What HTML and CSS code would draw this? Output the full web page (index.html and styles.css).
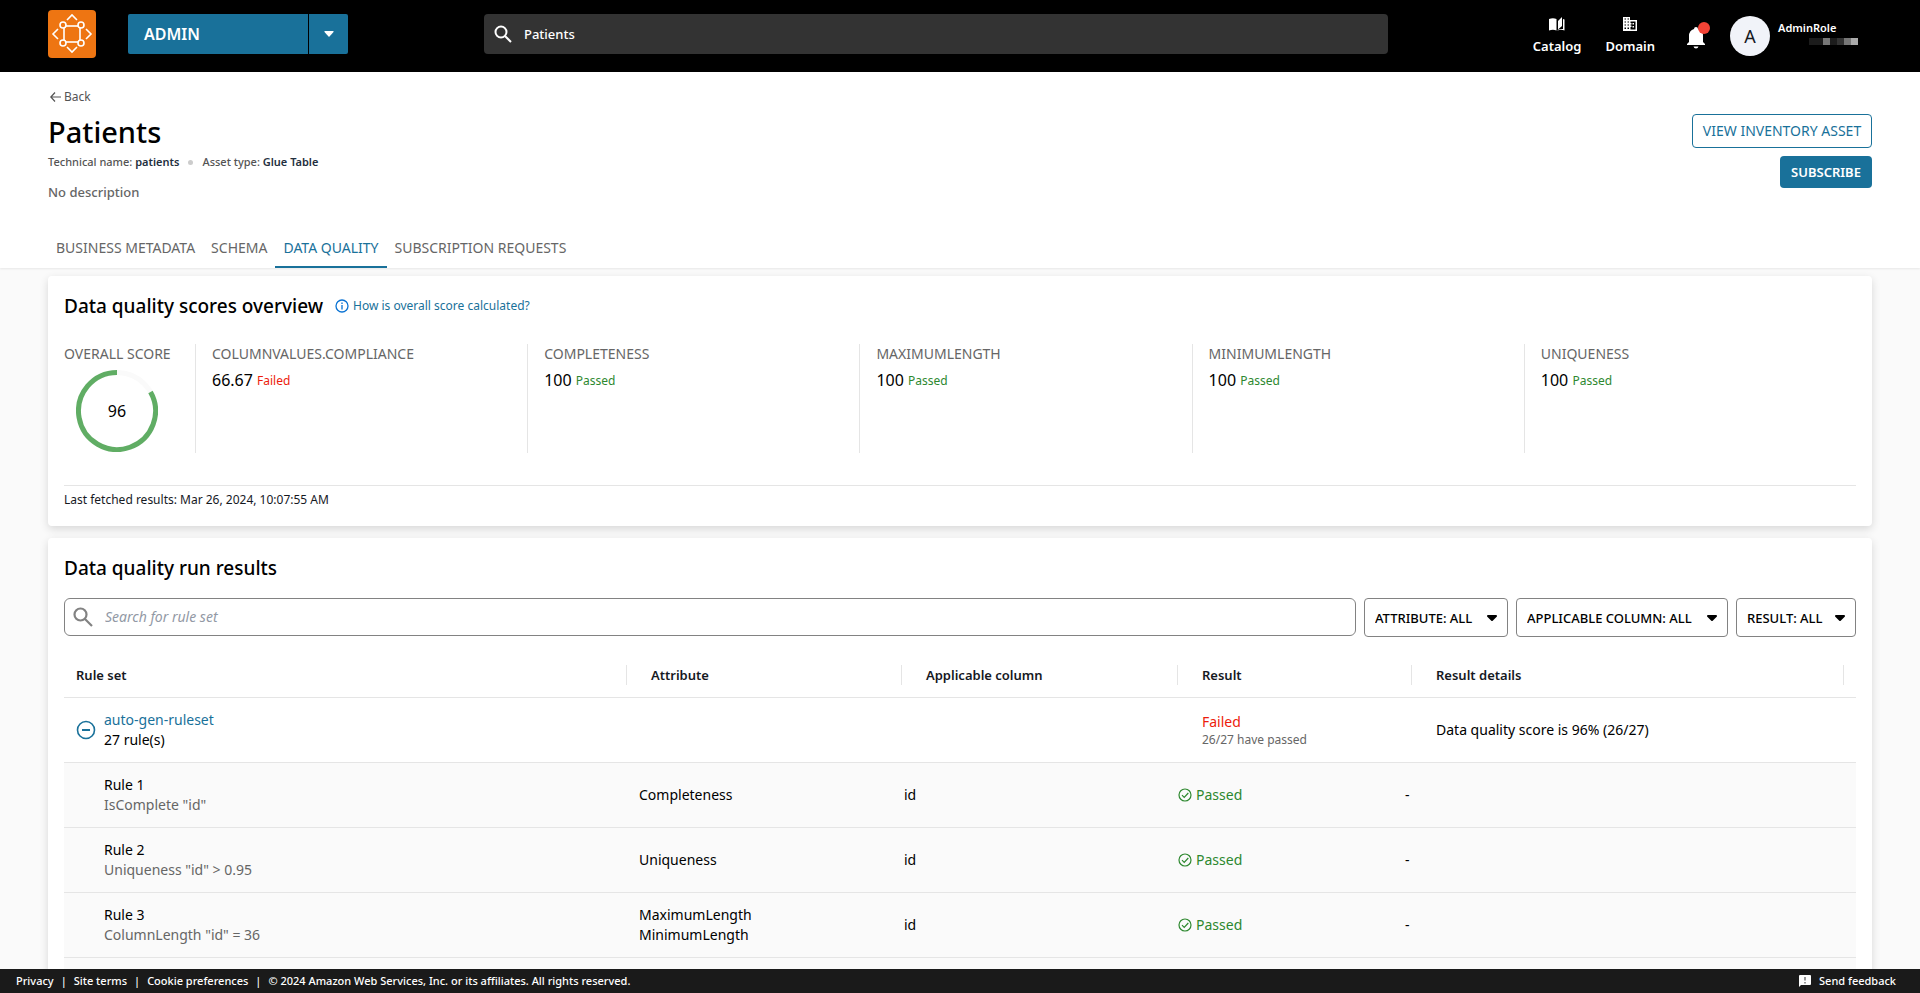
FILE: index.html
```html
<!DOCTYPE html>
<html lang="en">
<head>
  <meta charset="UTF-8" />
  <meta name="viewport" content="width=device-width, initial-scale=1.0"/>
  <title>Patients - Data quality</title>
  <link rel="stylesheet" href="styles.css">
</head>
<body>
  <!-- Top bar -->
  <header class="topbar">
    <a href="#" class="logo" aria-label="Home">
      <svg width="48" height="48" viewBox="0 0 48 48" fill="none" stroke="#fff" stroke-width="1.6">
        <rect x="16" y="16" width="16" height="16"/>
        <path d="M19 10l5-5 5 5M19 37l5 5 5-5M10 19l-5 5 5 5M38 19l5 5-5 5"/>
        <g fill="#ee7512">
          <circle cx="15" cy="15" r="3"/>
          <circle cx="33" cy="15" r="3"/>
          <circle cx="15" cy="33" r="3"/>
          <circle cx="33" cy="33" r="3"/>
        </g>
      </svg>
    </a>
    <div class="project">
      <button class="project-name">ADMIN</button>
      <button class="project-toggle" aria-label="Choose project">
        <svg width="10" height="6" viewBox="0 0 10 6"><path d="M1 0h8q1 0 .5 1L5.500 5.500q-.5.500-1 0L.5 1Q0 0 1 0z" fill="#fff"/></svg>
      </button>
    </div>
    <div class="site-search">
      <svg width="18" height="18" viewBox="0 0 18 18" fill="none" stroke="#fff" stroke-width="2"><circle cx="7" cy="7" r="5.500"/><path d="M11 11l6 6"/></svg>
      <input type="text" value="Patients" aria-label="Search catalog">
    </div>
    <nav class="top-links">
      <a href="#">
        <svg width="16" height="14" viewBox="0 0 16 14" fill="#fff"><path d="M0 2q4-1.500 7.500 0v11.500Q4 12 0 13.500zM13 0v9l-4 3.500V4zM14 2l1.500.5v11Q12 12 8.500 13.500V13q3-1.500 5.500-1z"/></svg>
        <span>Catalog</span>
      </a>
      <a href="#">
        <svg width="14" height="14" viewBox="0 0 14 14" fill="#fff"><path fill-rule="evenodd" d="M0 0h7v3h7v11H0zM1.500 1.500v1h1.500v-1zM4.500 1.500v1h1.500v-1zM1.500 4.500v1h1.500v-1zM4.500 4.500v1h1.500v-1zM1.500 7.500v1h1.500v-1zM4.500 7.500v1h1.500v-1zM1.500 10.500v1.500h1.500v-1.500zM4.500 10.500v1.500h1.500v-1.500zM7.500 4.500v1.500h1v1.500h-1v1h1v1.500h-1v2.500h5V4.500zM9.500 6h1.500v1.500H9.500zM9.500 9h1.500v1.500H9.500z"/></svg>
        <span>Domain</span>
      </a>
    </nav>
    <button class="bell" aria-label="Notifications">
      <svg width="18" height="22" viewBox="0 0 18 22" fill="#fff"><path d="M9 0q2 0 2 2 5 1.500 5 7v6l2 2v1H0v-1l2-2V9q0-5.500 5-7 0-2 2-2zM6.500 19.500h5q-.5 2-2.500 2t-2.500-2z"/></svg>
      <span class="bell-dot"></span>
    </button>
    <div class="user">
      <span class="avatar">A</span>
      <div class="user-text">
        <span>AdminRole</span>
        <span class="masked"><i></i><i></i><i></i><i></i><i></i><i></i><i></i></span>
      </div>
    </div>
  </header>

  <!-- Asset title and tabs -->
  <section class="asset">
    <div class="asset-row">
      <div>
        <a href="#" class="back">
          <svg width="11" height="10" viewBox="0 0 11 10" fill="none" stroke="#545454" stroke-width="1.200"><path d="M5 .5L.8 5 5 9.500M1 5h10"/></svg>
          Back
        </a>
        <h1>Patients</h1>
        <p class="meta">
          <span>Technical name: <b>patients</b></span>
          <span class="meta-dot"></span>
          <span>Asset type: <b>Glue Table</b></span>
        </p>
        <p class="description">No description</p>
      </div>
      <div class="actions">
        <button class="btn-outline">VIEW INVENTORY ASSET</button>
        <button class="btn-primary">SUBSCRIBE</button>
      </div>
    </div>
    <nav class="tabs">
      <a href="#">BUSINESS METADATA</a>
      <a href="#">SCHEMA</a>
      <a href="#" class="active">DATA QUALITY</a>
      <a href="#">SUBSCRIPTION REQUESTS</a>
    </nav>
  </section>

  <main>
    <section class="card overview">
      <div class="card-head">
        <h2>Data quality scores overview</h2>
        <a href="#" class="info">
          <svg width="14" height="14" viewBox="0 0 14 14" fill="none" stroke="#0972d3" stroke-width="1.300"><circle cx="7" cy="7" r="6"/><path d="M7 6v4.500M7 3.500v1.500"/></svg>
          How is overall score calculated?
        </a>
      </div>
      <div class="scores">
        <div class="overall">
          <h3>OVERALL SCORE</h3>
          <div class="ring">
            <svg width="82" height="82" viewBox="0 0 82 82" fill="none" stroke-width="5">
              <circle cx="41" cy="41" r="38.500" stroke="#fafafa"/>
              <path d="M74.500 22A38.500 38.500 0 1 1 41 2.500" stroke="#60ad64"/>
            </svg>
            <span>96</span>
          </div>
        </div>
        <div class="score"><h3>COLUMNVALUES.COMPLIANCE</h3><p>66.67 <small class="failed">Failed</small></p></div>
        <div class="score"><h3>COMPLETENESS</h3><p>100 <small class="passed">Passed</small></p></div>
        <div class="score"><h3>MAXIMUMLENGTH</h3><p>100 <small class="passed">Passed</small></p></div>
        <div class="score"><h3>MINIMUMLENGTH</h3><p>100 <small class="passed">Passed</small></p></div>
        <div class="score"><h3>UNIQUENESS</h3><p>100 <small class="passed">Passed</small></p></div>
      </div>
      <p class="fetched">Last fetched results: Mar 26, 2024, 10:07:55 AM</p>
    </section>

    <section class="card results">
      <h2>Data quality run results</h2>
      <div class="filters">
        <div class="rule-search">
          <svg width="20" height="20" viewBox="0 0 20 20" fill="none" stroke="#828282" stroke-width="2.200"><circle cx="7.500" cy="7.500" r="6"/><path d="M12 12l7 7"/></svg>
          <input type="text" placeholder="Search for rule set" aria-label="Search for rule set">
        </div>
        <select class="filter-attribute" aria-label="Attribute"><option>ATTRIBUTE: ALL</option></select>
        <select class="filter-column" aria-label="Applicable column"><option>APPLICABLE COLUMN: ALL</option></select>
        <select class="filter-result" aria-label="Result"><option>RESULT: ALL</option></select>
      </div>

      <table>
        <colgroup>
          <col class="col-rule"><col class="col-attribute"><col class="col-column"><col class="col-result"><col>
        </colgroup>
        <thead>
          <tr>
            <th><span>Rule set</span></th>
            <th><span>Attribute</span></th>
            <th><span>Applicable column</span></th>
            <th><span>Result</span></th>
            <th><span class="last">Result details</span></th>
          </tr>
        </thead>
        <tbody>
          <tr>
            <td>
              <div class="ruleset">
                <button aria-label="Collapse ruleset">
                  <svg width="20" height="20" viewBox="0 0 20 20" fill="none" stroke="#19719a" stroke-width="1.600"><circle cx="10" cy="10" r="8.500"/><path d="M6 10h8" stroke-width="2"/></svg>
                </button>
                <div><a href="#">auto-gen-ruleset</a><br>27 rule(s)</div>
              </div>
            </td>
            <td></td>
            <td></td>
            <td><span class="failed">Failed</span><small>26/27 have passed</small></td>
            <td>Data quality score is 96% (26/27)</td>
          </tr>
          <tr class="rule">
            <td>Rule 1<br><span class="expr">IsComplete "id"</span></td>
            <td>Completeness</td>
            <td>id</td>
            <td class="passed"><svg class="check"><use href="#check"/></svg>Passed</td>
            <td>-</td>
          </tr>
          <tr class="rule">
            <td>Rule 2<br><span class="expr">Uniqueness "id" &gt; 0.95</span></td>
            <td>Uniqueness</td>
            <td>id</td>
            <td class="passed"><svg class="check"><use href="#check"/></svg>Passed</td>
            <td>-</td>
          </tr>
          <tr class="rule">
            <td>Rule 3<br><span class="expr">ColumnLength "id" = 36</span></td>
            <td>MaximumLength<br>MinimumLength</td>
            <td>id</td>
            <td class="passed"><svg class="check"><use href="#check"/></svg>Passed</td>
            <td>-</td>
          </tr>
          <tr class="rule">
            <td></td><td></td><td></td><td></td><td></td>
          </tr>
        </tbody>
      </table>
    </section>
  </main>

  <footer>
    <a href="#">Privacy</a><i>|</i>
    <a href="#">Site terms</a><i>|</i>
    <a href="#">Cookie preferences</a><i>|</i>
    <span>© 2024 Amazon Web Services, Inc. or its affiliates. All rights reserved.</span>
    <button class="feedback">
      <svg width="12" height="12" viewBox="0 0 12 12"><path d="M1 0h10q1 0 1 1v8q0 1-1 1H2l-2 2V1q0-1 1-1z" fill="#fff"/><path d="M6 2v3.500M6 7v1.500" stroke="#555" stroke-width="1.200"/></svg>
      Send feedback
    </button>
  </footer>

  <svg class="sprite" aria-hidden="true">
    <symbol id="check" viewBox="0 0 14 14">
      <circle cx="7" cy="7" r="6" fill="none" stroke="#2d882f" stroke-width="1.200"/>
      <path d="M4 7.200l2.200 2.200L10.300 5" fill="none" stroke="#2d882f" stroke-width="1.200"/>
    </symbol>
  </svg>
</body>
</html>
```

FILE: styles.css
```css
* {
  box-sizing: border-box;
}

body {
  margin: 0;
  height: 100vh;
  display: flex;
  flex-direction: column;
  overflow: hidden;
  background: #fafafa;
  color: #000;
  font-family: 'Noto Sans', sans-serif;
  font-size: 14px;
  line-height: 20px;
}

h1, h2, h3, p {
  margin: 0;
  font-weight: 500;
}

a {
  color: inherit;
  text-decoration: none;
}

button, input, select {
  font: inherit;
  border: none;
  padding: 0;
}

button {
  background: none;
  cursor: pointer;
}

svg {
  display: block;
  flex: none;
}

/* Top bar */
.topbar {
  flex: none;
  display: flex;
  height: 72px;
  padding: 0 62px 0 48px;
  background: #000;
  color: #fff;
}

.logo {
  width: 48px;
  height: 48px;
  margin: 10px 32px 0 0;
  border-radius: 4px;
  background: #ee7512;
}

.project {
  display: flex;
  gap: 1px;
  height: 40px;
  margin: 14px 136px 0 0;
}

.project button {
  background: #19719a;
  color: #fff;
}

.project-name {
  width: 180px;
  padding-left: 16px;
  border-radius: 2px 0 0 2px;
  font-size: 16px;
  font-weight: 600;
  text-align: left;
}

.project-toggle {
  display: flex;
  align-items: center;
  justify-content: center;
  width: 39px;
  border-radius: 0 2px 2px 0;
}

.site-search {
  flex: 0 1 904px;
  display: flex;
  align-items: center;
  gap: 12px;
  height: 40px;
  margin-top: 14px;
  padding: 0 10px;
  border-radius: 4px;
  background: #333;
}

.site-search input {
  flex: 1;
  background: none;
  color: #fff;
  font-size: 13px;
  font-weight: 500;
}

.top-links {
  display: flex;
  gap: 24px;
  margin: 17px 32px 0 auto;
  font-size: 13px;
  font-weight: 600;
}

.top-links a {
  display: flex;
  flex-direction: column;
  align-items: center;
  gap: 5px;
}

.bell {
  position: relative;
  align-self: flex-start;
  margin: 27px 25px 0 0;
}

.bell-dot {
  position: absolute;
  top: -5px;
  right: -5px;
  width: 12px;
  height: 12px;
  border-radius: 50%;
  background: #f44336;
}

.user {
  display: flex;
  gap: 8px;
  margin-top: 16px;
}

.avatar {
  width: 40px;
  height: 40px;
  border-radius: 50%;
  background: #f1f3f9;
  color: #16191f;
  font-size: 18px;
  line-height: 40px;
  text-align: center;
}

.user-text {
  padding-top: 2px;
  font-size: 11px;
  font-weight: 600;
}

.masked {
  display: flex;
  margin-left: 31px;
}

.masked i {
  width: 7px;
  height: 7px;
  background: #1c1c1c;
}

.masked i:nth-child(3), .masked i:nth-child(6) {
  background: #777;
}

.masked i:nth-child(5) {
  background: #333;
}

.masked i:nth-child(7) {
  background: #aaa;
}

/* Asset header */
.asset {
  flex: none;
  background: #fff;
  padding: 15px 48px 0;
  box-shadow: 0 1px 2px rgba(0,0,0,0.08);
}

.asset-row {
  display: flex;
  justify-content: space-between;
  height: 145px;
}

.back {
  display: flex;
  align-items: center;
  gap: 3px;
  padding-left: 2px;
  color: #545454;
  font-size: 12px;
}

h1 {
  margin-top: 5px;
  font-size: 29px;
  line-height: 40px;
}

.meta {
  display: flex;
  align-items: center;
  color: #545454;
  font-size: 11px;
}

.meta b {
  color: #232f3e;
  font-weight: 600;
}

.meta-dot {
  width: 5px;
  height: 5px;
  margin: 0 9px;
  border-radius: 50%;
  background: #ccc;
}

.description {
  margin-top: 10px;
  color: #666;
  font-size: 13px;
}

.actions {
  display: flex;
  flex-direction: column;
  align-items: flex-end;
  gap: 8px;
  padding-top: 27px;
}

.actions button {
  border-radius: 4px;
}

.btn-outline {
  width: 180px;
  height: 34px;
  border: 1px solid #19719a;
  background: #fff;
  color: #19719a;
}

.btn-primary {
  width: 92px;
  height: 32px;
  background: #19719a;
  color: #fff;
  font-size: 13px;
  font-weight: 600;
}

.tabs {
  display: flex;
  color: #666;
}

.tabs a {
  height: 36px;
  padding: 6px 8px;
}

.tabs .active {
  color: #19719a;
  border-bottom: 2px solid #19719a;
}

/* Cards */
main {
  flex: 1;
  min-height: 0;
  overflow: hidden;
  padding: 8px 48px 0;
}

.card {
  padding: 16px;
  border-radius: 4px;
  background: #fff;
  box-shadow: 0 3px 8px rgba(0,0,0,0.14);
}

h2 {
  font-size: 19px;
  line-height: 28px;
}

.card-head {
  display: flex;
  align-items: center;
  gap: 12px;
}

.info {
  display: flex;
  align-items: center;
  gap: 4px;
  color: #19719a;
  font-size: 12px;
}

.scores {
  display: flex;
  height: 109px;
  margin-top: 24px;
}

h3 {
  color: #666;
  font-size: 14px;
  font-weight: 400;
  line-height: 20px;
}

.overall {
  width: 131px;
}

.ring {
  position: relative;
  width: 82px;
  margin: 6px 0 0 12px;
}

.ring span {
  position: absolute;
  inset: 0;
  font-size: 16px;
  line-height: 82px;
  text-align: center;
}

.score {
  flex: 1;
  padding-left: 16px;
  border-left: 1px solid #e5e5e5;
}

.score p {
  margin-top: 6px;
  font-size: 16px;
  font-weight: 400;
}

.score small {
  font-size: 12px;
  vertical-align: 1px;
}

.passed {
  color: #2d882f;
}

.failed {
  color: #ed1c0c;
}

.fetched {
  margin-top: 32px;
  padding-top: 4px;
  border-top: 1px solid #e5e5e5;
  color: #16191f;
  font-size: 12px;
  font-weight: 400;
}

.overview {
  height: 250px;
}

.results {
  margin-top: 12px;
}

/* Filters */
.filters {
  display: flex;
  gap: 8px;
  margin-top: 16px;
}

.rule-search {
  flex: 1;
  display: flex;
  align-items: center;
  gap: 12px;
  height: 38px;
  padding: 0 8px;
  border: 1px solid #828282;
  border-radius: 6px;
}

.rule-search input {
  flex: 1;
}

.rule-search input::placeholder {
  color: #9299a5;
  font-style: italic;
}

.filters select {
  height: 39px;
  padding: 0 10px;
  border: 1px solid #828282;
  border-radius: 4px;
  appearance: none;
  color: #000;
  font-size: 13px;
  font-weight: 500;
  background: #fff url("data:image/svg+xml,%3Csvg xmlns='http://www.w3.org/2000/svg' width='12' height='8'%3E%3Cpath d='M2 2h8L6 6z' stroke='%23000' stroke-width='2' stroke-linejoin='round'/%3E%3C/svg%3E") no-repeat right 9px center;
}

.filter-attribute {
  width: 144px;
}

.filter-column {
  width: 212px;
}

.filter-result {
  width: 120px;
}

/* Rule table */
table {
  width: 100%;
  margin-top: 16px;
  border-collapse: collapse;
  table-layout: fixed;
}

.col-rule {
  width: 563px;
}

.col-attribute {
  width: 275px;
}

.col-column {
  width: 276px;
}

.col-result {
  width: 234px;
}

th {
  height: 44px;
  padding: 0;
  border-bottom: 1px solid #e5e5e5;
  color: #16191f;
  font-size: 13px;
  font-weight: 600;
  text-align: left;
}

th span {
  display: block;
  padding-left: 24px;
  border-right: 1px solid #e5e5e5;
}

th:first-child span {
  padding-left: 12px;
}

th .last {
  margin-right: 12px;
}

td {
  height: 65px;
  padding: 0 0 0 24px;
  border-bottom: 1px solid #e5e5e5;
}

td:first-child {
  padding-left: 12px;
}

td a {
  color: #19719a;
}

td small {
  display: block;
  color: #666;
  font-size: 12px;
  line-height: 16px;
}

.ruleset {
  display: flex;
  align-items: center;
  gap: 8px;
}

.rule {
  background: #fafafa;
}

.rule td {
  padding-left: 0;
}

.rule td:first-child {
  padding-left: 40px;
}

.rule td:nth-child(2) {
  padding-left: 12px;
}

.rule td:nth-child(3) {
  padding-left: 2px;
}

.rule td:last-child {
  text-indent: -7px;
}

.expr {
  color: #666;
}

.check {
  display: inline-block;
  width: 14px;
  height: 14px;
  margin-right: 4px;
  vertical-align: -2px;
}

/* Footer */
footer {
  flex: none;
  display: flex;
  align-items: center;
  height: 24px;
  padding: 0 24px 0 16px;
  background: #1a1a1a;
  color: #fff;
  font-size: 11px;
  font-weight: 500;
}

footer i {
  margin: 0 7px;
  font-style: normal;
}

.feedback {
  display: flex;
  align-items: center;
  gap: 8px;
  margin-left: auto;
  color: #fff;
}

.sprite {
  position: absolute;
  width: 0;
  height: 0;
}
```
